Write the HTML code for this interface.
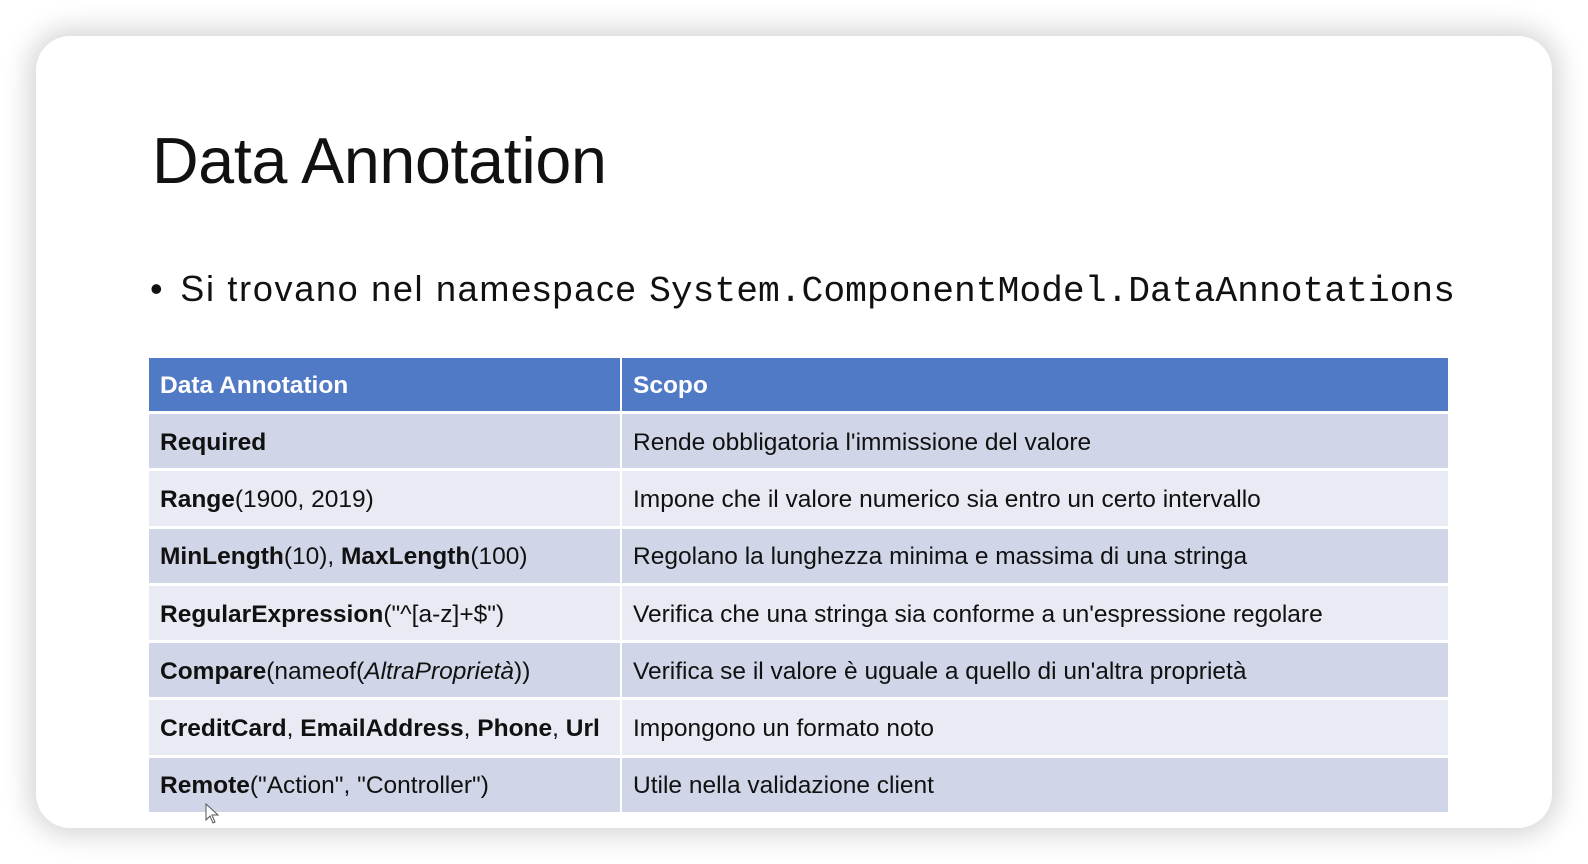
<!DOCTYPE html>
<html><head><meta charset="utf-8"><style>
html,body{margin:0;padding:0;width:1588px;height:864px;background:#fff;overflow:hidden;font-family:"Liberation Sans",sans-serif}
.card{position:absolute;left:36px;top:36px;width:1516px;height:792px;background:#fff;border-radius:34px;box-shadow:0 0 28px 6px rgba(0,0,0,0.18)}
.title{position:absolute;left:152px;top:124px;font-size:64.5px;color:#111;letter-spacing:-0.3px;white-space:nowrap}
.bullet{position:absolute;left:150px;top:268px;font-size:36px;color:#111;white-space:nowrap}
.bullet .p{letter-spacing:1.7px;margin-left:6px}
.bullet .m{font-family:"Liberation Mono",monospace;font-size:36.3px;letter-spacing:0}
table{position:absolute;left:149px;top:358px;width:1299px;border-collapse:collapse;font-size:24.5px;color:#111}
td{padding:3px 0 0 11px;height:51.3px;border-left:2px solid #fff;border-top:3px solid #fff;white-space:nowrap}
td:first-child{border-left:none;width:460px}
tr.h td{background:#5079c6;color:#fff;font-weight:bold;height:50px;border-top:none}
tr.a td{background:#d0d6e7}
tr.b td{background:#e9ebf4}
</style></head><body>
<div class="card"></div>
<div class="title">Data Annotation</div>
<div class="bullet">•<span class="p"> Si trovano nel namespace </span><span class="m">System.ComponentModel.DataAnnotations</span></div>
<table>
<tr class="h"><td>Data Annotation</td><td>Scopo</td></tr>
<tr class="a"><td><b>Required</b></td><td>Rende obbligatoria l'immissione del valore</td></tr>
<tr class="b"><td><b>Range</b>(1900, 2019)</td><td>Impone che il valore numerico sia entro un certo intervallo</td></tr>
<tr class="a"><td><b>MinLength</b>(10), <b>MaxLength</b>(100)</td><td>Regolano la lunghezza minima e massima di una stringa</td></tr>
<tr class="b"><td><b>RegularExpression</b>("^[a-z]+$")</td><td>Verifica che una stringa sia conforme a un'espressione regolare</td></tr>
<tr class="a"><td><b>Compare</b>(nameof(<i>AltraProprietà</i>))</td><td>Verifica se il valore è uguale a quello di un'altra proprietà</td></tr>
<tr class="b"><td><b>CreditCard</b>, <b>EmailAddress</b>, <b>Phone</b>, <b>Url</b></td><td>Impongono un formato noto</td></tr>
<tr class="a"><td><b>Remote</b>("Action", "Controller")</td><td>Utile nella validazione client</td></tr>
</table>
<svg style="position:absolute;left:205px;top:803px" width="16" height="22" viewBox="0 0 16 22"><path d="M1 1 L1 17 L5 13 L8 20 L10 19 L7 12 L13 12 Z" fill="#fff" stroke="#555" stroke-width="1"/></svg>
</body></html>
